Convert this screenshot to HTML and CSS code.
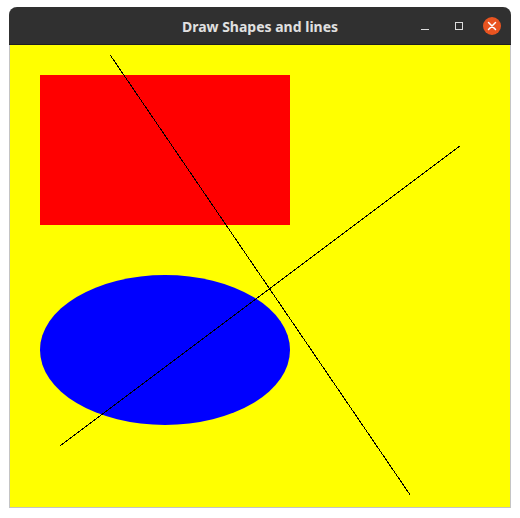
FILE: index.html
```html
<!DOCTYPE html>
<html>
<head>
<meta charset="utf-8">
<link rel="stylesheet" href="styles.css">
</head>
<body>
<div class="window">
  <div class="titlebar">
    <span class="title">Draw Shapes and lines</span>
    <div class="controls">
      <span class="btn min"><svg width="10" height="10" viewBox="0 0 10 10"><rect x="1" y="8" width="8" height="1" fill="#dcdcdc"/></svg></span>
      <span class="btn max"><svg width="10" height="10" viewBox="0 0 10 10"><rect x="1.5" y="1.5" width="7" height="7" fill="none" stroke="#dcdcdc" stroke-width="1"/></svg></span>
      <span class="btn close"><svg width="18" height="18" viewBox="0 0 18 18"><circle cx="9" cy="9" r="9" fill="#e95420"/><path d="M5.5 5.5 L12.5 12.5 M12.5 5.5 L5.5 12.5" stroke="#ffffff" stroke-width="1.5" stroke-linecap="round"/></svg></span>
    </div>
  </div>
  <svg class="canvas" width="500" height="462" viewBox="0 0 500 462">
    <rect x="30" y="30" width="250" height="150" fill="#ff0000"/>
    <ellipse cx="155" cy="305" rx="125" ry="75" fill="#0000ff"/>
    <line x1="100.5" y1="10.5" x2="400.5" y2="450.5" stroke="#000" stroke-width="1" shape-rendering="crispEdges"/>
    <line x1="50.5" y1="400.5" x2="450.5" y2="100.5" stroke="#000" stroke-width="1" shape-rendering="crispEdges"/>
  </svg>
</div>
</body>
</html>
```
FILE: styles.css
```css
html, body {
  margin: 0;
  padding: 0;
  background: #ffffff;
}
.window {
  margin: 7px 0 0 9px;
  width: 502px;
  display: flex;
  flex-direction: column;
  border: 1px solid #c4c4c4;
  border-top: none;
  border-radius: 8px 8px 0 0;
  box-sizing: border-box;
}
.titlebar {
  height: 38px;
  margin: 0 -1px;
  background: #303030;
  border-radius: 8px 8px 0 0;
  border-bottom: 1px solid #1e1e1e;
  box-sizing: border-box;
  display: flex;
  align-items: center;
  justify-content: center;
  position: relative;
}
.title {
  font-family: "Noto Sans", "DejaVu Sans", sans-serif;
  font-weight: bold;
  font-size: 14px;
  color: #e0e0e0;
  padding-top: 1px;
}
.controls {
  position: absolute;
  right: 10px;
  top: 10px;
  display: flex;
  align-items: center;
}
.btn {
  display: flex;
  align-items: center;
  justify-content: center;
}
.min, .max { width: 14px; height: 18px; }
.min { margin-right: 20px; }
.max { margin-right: 17px; }
.canvas {
  display: block;
  background: #ffff00;
}
```
